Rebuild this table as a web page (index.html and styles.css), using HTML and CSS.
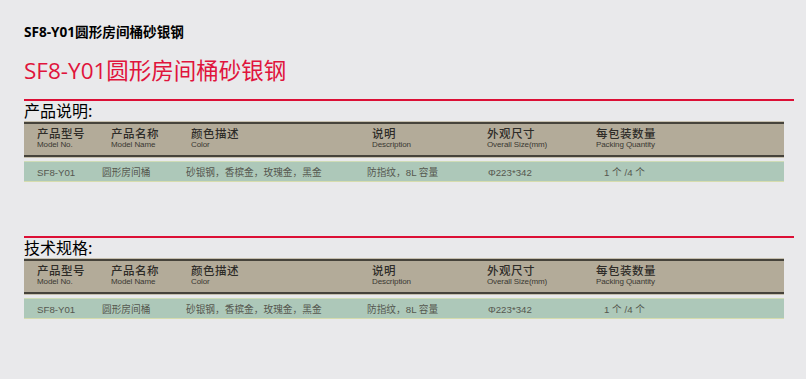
FILE: index.html
```html
<!DOCTYPE html>
<html lang="zh">
<head>
<meta charset="utf-8">
<link rel="stylesheet" href="styles.css">
</head>
<body>
<div class="page">
  <h1 class="crumb">SF8-Y01圆形房间桶砂银钢</h1>
  <h2 class="title">SF8-Y01圆形房间桶砂银钢</h2>

  <section class="sec">
    <div class="sec-title">产品说明:</div>
    <div class="thead">
      <div class="c1"><b>产品型号</b><span>Model No.</span></div>
      <div class="c2"><b>产品名称</b><span>Model Name</span></div>
      <div class="c3"><b>颜色描述</b><span>Color</span></div>
      <div class="c4"><b>说明</b><span>Description</span></div>
      <div class="c5"><b>外观尺寸</b><span>Overall Size(mm)</span></div>
      <div class="c6"><b>每包装数量</b><span>Packing Quantity</span></div>
    </div>
    <div class="trow">
      <div>SF8-Y01</div>
      <div>圆形房间桶</div>
      <div>砂银钢，香槟金，玫瑰金，黑金</div>
      <div>防指纹，8L 容量</div>
      <div>Φ223*342</div>
      <div>1 个 /4 个</div>
    </div>
  </section>

  <section class="sec sec2">
    <div class="sec-title">技术规格:</div>
    <div class="thead">
      <div class="c1"><b>产品型号</b><span>Model No.</span></div>
      <div class="c2"><b>产品名称</b><span>Model Name</span></div>
      <div class="c3"><b>颜色描述</b><span>Color</span></div>
      <div class="c4"><b>说明</b><span>Description</span></div>
      <div class="c5"><b>外观尺寸</b><span>Overall Size(mm)</span></div>
      <div class="c6"><b>每包装数量</b><span>Packing Quantity</span></div>
    </div>
    <div class="trow">
      <div>SF8-Y01</div>
      <div>圆形房间桶</div>
      <div>砂银钢，香槟金，玫瑰金，黑金</div>
      <div>防指纹，8L 容量</div>
      <div>Φ223*342</div>
      <div>1 个 /4 个</div>
    </div>
  </section>
</div>
</body>
</html>
```
FILE: styles.css
```css
html, body {
  margin: 0;
  padding: 0;
  background: #e9e9eb;
}
body {
  font-family: "Open Sans", "Noto Sans CJK SC", sans-serif;
  color: #000;
}
.page {
  padding: 22px 12px 0 24px;
}
.crumb {
  margin: 0;
  font-size: 13.6px;
  line-height: 20px;
  font-weight: 700;
}
.title {
  margin: 14px 0 0 0;
  font-size: 22.5px;
  line-height: 30px;
  font-weight: 400;
  color: #e0143c;
}
.sec {
  margin-top: 13px;
  border-top: 2px solid #dc0f35;
}
.sec2 {
  margin-top: 54px;
}
.sec-title {
  font-family: "Noto Sans CJK SC", sans-serif;
  font-size: 16px;
  line-height: 19px;
  margin-top: 0;
}
.thead {
  height: 29px;
  background: #b3ab99;
  border-top: 2px solid #46433b;
  border-bottom: 2px solid #46433b;
  box-shadow: 0 -1px 0 #c6bfae, 0 1px 0 #c6bfae;
  margin-top: 2px;
  display: grid;
  grid-template-columns: 74px 80px 181px 115px 109px 1fr;
  padding-left: 13px;
  box-sizing: content-box;
  width: 747px;
  align-content: start;
  padding-top: 2px;
}
.thead div {
  display: flex;
  flex-direction: column;
}
.thead b {
  font-family: "Noto Sans CJK SC", sans-serif;
  font-size: 11.5px;
  line-height: 14px;
  font-weight: 500;
  color: #2e2c28;
  letter-spacing: 0.5px;
}
.thead span {
  font-family: "Liberation Sans", Arial, sans-serif;
  font-size: 8px;
  line-height: 10px;
  color: #3a3832;
  letter-spacing: -0.1px;
}
.trow {
  margin-top: 4px;
  height: 19px;
  width: 747px;
  padding-left: 13px;
  background: #adc8b9;
  border-top: 1px solid #cfdcb6;
  border-bottom: 1px solid #d6dcae;
  display: grid;
  grid-template-columns: 65px 84px 181px 121px 116px 1fr;
  align-items: center;
  padding-top: 1px;
  box-sizing: content-box;
  height: 18px;
  font-family: "Liberation Sans", "Noto Sans CJK SC", sans-serif;
  font-size: 9.7px;
  color: #55574f;
}
```
